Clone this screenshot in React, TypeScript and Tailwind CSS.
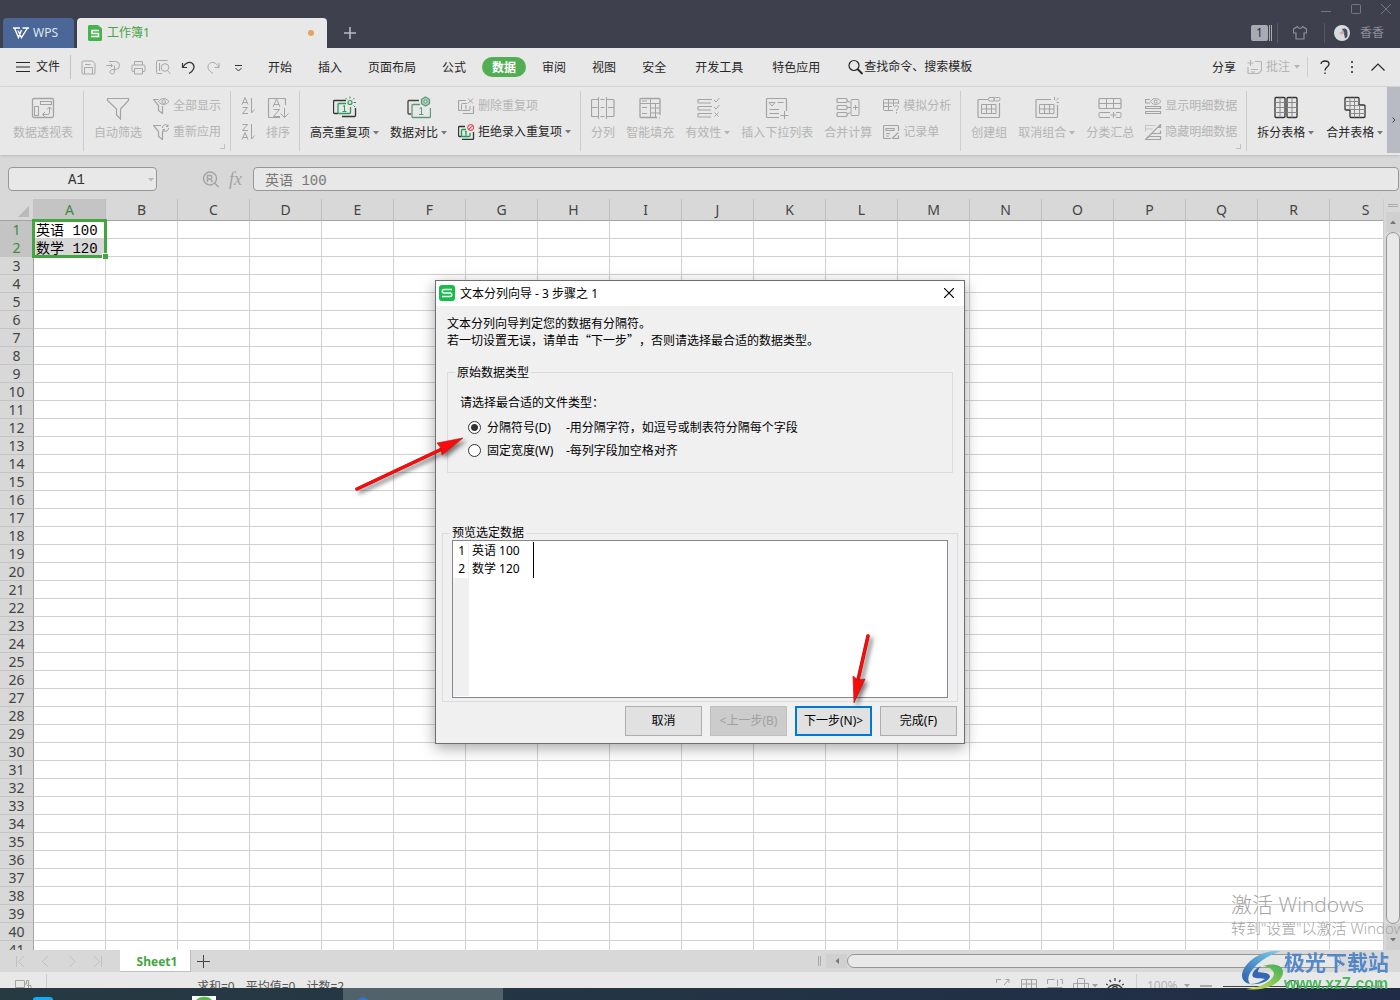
import type { ReactNode } from "react";
import { clsx } from "clsx";

const COLUMNS = "ABCDEFGHIJKLMNOPQRS".split("");
const ROWS = Array.from({ length: 41 }, (_, i) => i + 1);

const CELLS: Record<string, string> = {
    A1: "英语 100",
    A2: "数学 120",
};

/* ICONS */

interface IconProps {
    w?: number;
    h?: number;
    children: ReactNode;
    className?: string;
}

function Icon({ w = 24, h = 24, children, className }: IconProps) {
    return (
        <svg
            width={w}
            height={h}
            viewBox={`0 0 ${w} ${h}`}
            fill="none"
            stroke="currentColor"
            strokeWidth="1"
            aria-hidden="true"
            className={clsx("shrink-0", className)}
        >
            {children}
        </svg>
    );
}

function Caret({ className }: { className?: string }) {
    return (
        <Icon w={6} h={4} className={className}>
            <path d="M0 0h6L3 3.5z" fill="currentColor" stroke="none" />
        </Icon>
    );
}

const PivotIcon = () => (
    <Icon>
        <rect x="1.5" y="2.5" width="21" height="19" rx="1.5" strokeWidth="1.3" />
        <rect x="9.5" y="5.5" width="11" height="3" />
        <rect x="3.5" y="10.5" width="4" height="9" />
        <path d="M12 18.5h4.5a2 2 0 0 0 2-2V11M14 16l-2.5 2.5L14 21M16 13.5l2.5-2.5 2.5 2.5" />
    </Icon>
);

const FilterIcon = () => (
    <Icon>
        <path d="M1.5 2.5h21v2l-8 8.5v10l-4-4V13l-9-8.5z" strokeWidth="1.2" />
    </Icon>
);

const FilterEyeIcon = () => (
    <Icon w={17} h={16}>
        <path d="M5.5 1.5h-5l5 6v5l4 3V8" strokeWidth="1.2" />
        <path d="M5.5 3.5c3-4 7-4 10.5 0-3.5 4-7.5 4-10.5 0z" />
        <circle cx="10.7" cy="3.7" r="1.8" />
    </Icon>
);

const FilterRefreshIcon = () => (
    <Icon w={17} h={16}>
        <path d="M8 1.5H.5l5 6v5l4 3V8l1-1" strokeWidth="1.2" />
        <path d="M9.5 4a3 3 0 0 1 5-2.5M15 .5v2h-2M15.5 4a3 3 0 0 1-5 2.5M10 7.5v-2h2" />
    </Icon>
);

const SortAscIcon = () => (
    <Icon w={14} h={18}>
        <path d="M1 7.5 4 .5l3 7M2 5.5h4M1.5 10.5h5l-5 6H7M10.5 1v15M10.5 16l3-3.5" />
    </Icon>
);

const SortDescIcon = () => (
    <Icon w={14} h={18}>
        <path d="M1.5 1.5h5l-5 6H7M1 16.5l3-7 3 7M2 14.5h4M10.5 1v15M10.5 16l3-3.5" />
    </Icon>
);

const SortIcon = () => (
    <Icon>
        <path d="M19.500 9V3.500a1 1 0 0 0-1-1h-15a1 1 0 0 0-1 1v17a1 1 0 0 0 1 1H14" strokeWidth="1.2" />
        <path d="M7 11l3.5-8L14 11M8 8.500h5M7.500 13.500h6l-6 7H14M18.500 12v9.500M14.500 17.500l4 4 4-4" />
    </Icon>
);

const HighlightIcon = () => (
    <Icon>
        <path d="M13 4.5H1.5a1 1 0 0 0-1 1v11a1 1 0 0 0 1 1H5M9 20.5h12.5a1 1 0 0 0 1-1V12" stroke="#333" strokeWidth="1.3" />
        <g stroke="#2f9a5c">
            <path d="M13 7.5H6a1 1 0 0 0-1 1v8a1 1 0 0 0 1 1h10.5a1 1 0 0 0 1-1V11" strokeWidth="1.3" />
            <path d="M10 10.5l1.5-1V16M9.5 15.5h4" />
            <circle cx="17" cy="6.5" r="2" strokeWidth="1.2" />
            <path d="M17 .5v2M12.5 2 14 3.500M21.5 2 20 3.500M20.5 6.500H23M20.5 9.500 22 11" />
        </g>
    </Icon>
);

const CompareIcon = () => (
    <Icon>
        <path d="M12 4.5H2a1 1 0 0 0-1 1V17a1 1 0 0 0 1 1h2" stroke="#444" strokeWidth="1.3" />
        <g stroke="#5a9a76">
            <path d="M13 8.5H6a1 1 0 0 0-1 1v11a1 1 0 0 0 1 1h16.5a1 1 0 0 0 1-1V12" strokeWidth="1.3" />
            <path d="M12.5 12.5l2-1v7M12 18.5h4.5" />
            <path d="M18.5 1l4 2.3v4.4l-4 2.3-4-2.3V3.3z" fill="#a9cbb8" strokeWidth="1.2" />
            <circle cx="18.5" cy="5.5" r="1.5" fill="#e8e8e8" />
        </g>
    </Icon>
);

const DeleteDupIcon = () => (
    <Icon w={17} h={16}>
        <path d="M8 2.5H1.5a1 1 0 0 0-1 1v8a1 1 0 0 0 1 1h2M5 15.5h9.5a1 1 0 0 0 1-1V8" strokeWidth="1.2" />
        <path d="M9 5.5H4.5a1 1 0 0 0-1 1v5a1 1 0 0 0 1 1H11a1 1 0 0 0 1-1V8M7 8l1-.5v4M10 .5l5 5M15 .5l-5 5" />
    </Icon>
);

const RejectDupIcon = () => (
    <Icon w={17} h={16}>
        <path d="M7 2.5H1.5a1 1 0 0 0-1 1v8a1 1 0 0 0 1 1h2M4 15.5h10.5a1 1 0 0 0 1-1V8" stroke="#333" strokeWidth="1.3" />
        <path d="M8 5.5H4.5a1 1 0 0 0-1 1v5a1 1 0 0 0 1 1H11a1 1 0 0 0 1-1V9M7 8l1-.5v4" stroke="#1f9a52" strokeWidth="1.3" />
        <circle cx="12.7" cy="3.5" r="3" fill="#f3d2d2" stroke="#d0393f" />
        <path d="M10.5 5.5l4.5-4" stroke="#d0393f" />
    </Icon>
);

const SplitColsIcon = () => (
    <Icon>
        <path d="M7 3.5H1.5a1 1 0 0 0-1 1v15a1 1 0 0 0 1 1H7M16 3.5h6a1 1 0 0 1 1 1v15a1 1 0 0 1-1 1h-6" strokeWidth="1.2" />
        <path d="M7.5 1v22M15.5 1v22M.5 11.5h6M17 11.5h6M9.5 3.5h4M9.5 20.5h4M9.5 11.5h4" />
    </Icon>
);

const SmartFillIcon = () => (
    <Icon>
        <path d="M19 21.5H3a1 1 0 0 1-1-1v-17a1 1 0 0 1 1-1h18a1 1 0 0 1 1 1V19" strokeWidth="1.3" />
        <path d="M2 7.5h20M12.5 2.5v19M4 5h5M4 11.5h5M4 17.5h5M12.5 12H22M12.5 17H22M17.5 7.5v14M22 22h-1" />
    </Icon>
);

const ValidityIcon = () => (
    <Icon>
        <path d="M16 3.5H3a1 1 0 0 0-1 1V6a1 1 0 0 0 1 1h12M16 10.5H3a1 1 0 0 0-1 1V13a1 1 0 0 0 1 1h12M16 17.5H3a1 1 0 0 0-1 1V20a1 1 0 0 0 1 1h12" strokeWidth="1.2" />
        <path d="M18 4l2 2 3.5-4M18 11l2 2 3.5-4M18.5 16.5l4 4M22.5 16.5l-4 4" />
    </Icon>
);

const DropListIcon = () => (
    <Icon>
        <path d="M21.5 15V3.5a1 1 0 0 0-1-1h-18a1 1 0 0 0-1 1v17a1 1 0 0 0 1 1H14" strokeWidth="1.2" />
        <path d="M4 6.5h6L7 10zM12.5 6.5h6M4.5 13.5H14M4.5 17.5H14M19.5 15v8M15.5 19.5h8" />
    </Icon>
);

const ConsolidateIcon = () => (
    <Icon>
        <rect x="1" y="2.5" width="10" height="4" rx="1" strokeWidth="1.2" />
        <rect x="1" y="9.5" width="10" height="4" rx="1" strokeWidth="1.2" />
        <rect x="1" y="16.5" width="10" height="4" rx="1" strokeWidth="1.2" />
        <rect x="15" y="3.5" width="8" height="16" rx="1" />
        <path d="M11 4.5l3 2M11 11.5h4M11 18.5l3-2M17 11.5h5M19.5 9v5" />
    </Icon>
);

const WhatIfIcon = () => (
    <Icon w={17} h={16}>
        <path d="M10 12.5H1.5a1 1 0 0 1-1-1v-9a1 1 0 0 1 1-1h13a1 1 0 0 1 1 1V6M.5 5h15M.5 8.5H9M5.5 1.5v11M10.5 1.5V8" />
        <path d="M11.5 9.5c0-2.5 4-2.5 4 0 0 1.5-2 1.5-2 3.5M13.5 14v1.5" />
    </Icon>
);

const FormIcon = () => (
    <Icon w={17} h={16}>
        <path d="M8 14.5H1.5a1 1 0 0 1-1-1v-11a1 1 0 0 1 1-1h13a1 1 0 0 1 1 1V7M3 4.5h8v2H3zM3 9.5h4M3 12h3M9 14.5l6.5-6M10 14.5h5.5v-3" strokeWidth="1.2" />
    </Icon>
);

const GridGlyph = ({ d }: { d: string }) => (
    <Icon>
        <path d={d} strokeWidth="1.2" />
        <path d="M4.5 8.5H19v9H4.5zM4.5 13H19M9.5 8.5v9M14.5 8.5v9" />
    </Icon>
);

const GroupIcon = () => (
    <div className="relative text-[#a3a3a3]">
        <GridGlyph d="M11 3.5H2a1 1 0 0 0-1 1v16a1 1 0 0 0 1 1h19.5a1 1 0 0 0 1-1V7" />
        <Icon w={13} h={5} className="absolute top-px right-0">
            <rect x=".5" y=".5" width="6" height="3.5" rx="1.5" />
            <rect x="6" y=".5" width="6" height="3.5" rx="1.5" />
        </Icon>
    </div>
);

const UngroupIcon = () => (
    <div className="relative text-[#a3a3a3]">
        <GridGlyph d="M16 3.5H2a1 1 0 0 0-1 1v16a1 1 0 0 0 1 1h19.5a1 1 0 0 0 1-1V9" />
        <Icon w={6} h={6} className="absolute top-px right-0">
            <path d="M1.5 0v3M5.5 1 3 3.5M3.5 5.5H6" />
        </Icon>
    </div>
);

const SubtotalIcon = () => (
    <Icon>
        <rect x="1" y="2.5" width="22" height="10" rx="1" strokeWidth="1.2" />
        <path d="M1 7.5h22M8.5 2.5v10M15.5 2.5v10M12 21.5H2a1 1 0 0 1-1-1v-3a1 1 0 0 1 1-1h10M18 16.5h4a1 1 0 0 1 1 1v3a1 1 0 0 1-1 1h-4M12.5 19h6M15.5 16v6" />
    </Icon>
);

const ShowDetailIcon = () => (
    <Icon w={17} h={16}>
        <path d="M5 1.5H.5V5H5M.5 8.5h15v2H.5zM.5 13.5h15v2H.5z" strokeWidth="1.2" />
        <path d="M5.500 3.500c3-4 7-4 10.500 0-3.500 4-7.500 4-10.500 0z" />
        <circle cx="10.7" cy="3.5" r="1.5" />
    </Icon>
);

const HideDetailIcon = () => (
    <Icon w={17} h={16}>
        <path d="M.5 8V1.5h10M.5 5h7" opacity=".5" />
        <path d="M.5 15.5l15-15v3H13M15.5 6.5v3H7M4 12.5h11.5v3H.5z" strokeWidth="1.2" />
    </Icon>
);

const SplitTableIcon = () => (
    <Icon>
        <rect x="1" y="1.5" width="10" height="20" rx="1" strokeWidth="1.3" />
        <rect x="13" y="1.5" width="10" height="20" rx="1" strokeWidth="1.3" />
        <path d="M1 6.5h10M1 11.5h10M1 16.5h10M6 1.5v20M13 6.5h10M13 11.5h10M13 16.5h10M18 1.5v20" stroke="#888" />
    </Icon>
);

const MergeTableIcon = () => (
    <Icon>
        <path d="M2 2.5a1 1 0 0 1 1-1h12a1 1 0 0 1 1 1V9h5a1 1 0 0 1 1 1v10.5a1 1 0 0 1-1 1H8a1 1 0 0 1-1-1V14H3a1 1 0 0 1-1-1z" strokeWidth="1.3" />
        <path d="M2 5.5h14M2 9.5h14M7 13.5h15M7 17.5h15M7 1.5V14M11.5 1.5v20M16.5 9v12.5" stroke="#888" />
    </Icon>
);

/* TITLE BAR */

function TitleBar() {
    return (
        <header className="flex h-12 shrink-0 justify-between bg-[#3e414d]">
            <div className="flex items-end">
                <button type="button" className="ml-[3px] flex h-[30px] w-[71px] items-center gap-1 rounded-t bg-[#4a6797] pl-[10px] text-xs text-[#dfe5ee]">
                    <Icon w={16} h={12} className="text-white">
                        <path d="M0 1h7M9.5 1H16M1.5 1l4 9.5 3-7.5M5 3.5l3.5 7 6-9.5" strokeWidth="1.4" />
                    </Icon>
                    WPS
                </button>
                <div className="ml-[3px] flex h-[30px] w-[250px] items-center rounded-t bg-[#e8e8e8] pl-[11px] text-xs text-[#43a53f]">
                    <Icon w={14} h={16} className="mr-[5px]">
                        <path d="M1.5 0H10l4 3.5v11a1.5 1.5 0 0 1-1.5 1.5h-11A1.5 1.5 0 0 1 0 14.5v-13A1.5 1.5 0 0 1 1.5 0z" fill="#45b449" stroke="none" />
                        <path d="M11 5.5H4v3h6.5v3H3" stroke="#fff" strokeWidth="1.5" />
                    </Icon>
                    工作簿1
                    <span className="mr-[13px] ml-auto size-[6px] rounded-full bg-[#e8a25c]" />
                </div>
                <button type="button" aria-label="新建" className="flex h-[30px] w-[46px] items-center justify-center text-[#b9bbc2]">
                    <Icon w={12} h={12}>
                        <path d="M6 0v12M0 6h12" strokeWidth="1.6" />
                    </Icon>
                </button>
            </div>
            <div className="flex flex-col items-end">
                <div className="flex h-[18px] items-center gap-5 pr-[9px] text-[#747782]">
                    <Icon w={10} h={10}>
                        <path d="M0 7.5h10" />
                    </Icon>
                    <Icon w={10} h={10}>
                        <rect x=".5" y=".5" width="9" height="9" rx="1" />
                    </Icon>
                    <Icon w={10} h={10}>
                        <path d="M0 0l10 10M10 0 0 10" />
                    </Icon>
                </div>
                <div className="flex h-[30px] items-center pr-4 text-xs text-[#8d8f99]">
                    <span className="flex h-4 w-[17px] items-center justify-center rounded-xs bg-[#a9abb3] text-[#2b2e38]">1</span>
                    <span className="ml-px h-4 w-[3px] border-x border-[#a9abb3]" />
                    <span className="ml-[5px] h-5 w-px bg-[#555863]" />
                    <Icon w={14} h={14} className="ml-[15px]">
                        <path d="M4.5.5C5 3 9 3 9.5.5l4 2.500v4H11v6H3V7H.5V3z" strokeWidth="1.2" />
                    </Icon>
                    <span className="ml-[17px] h-5 w-px bg-[#555863]" />
                    <Icon w={16} h={16} className="ml-[9px]">
                        <circle cx="8" cy="8" r="8" fill="#d5dde0" stroke="none" />
                        <path d="M8 4c3-1.5 5.5 0 5.5 3.5 0 3 .5 4-2 6-1.5-1-.5-3-1.5-4.5z" fill="#4d4c58" stroke="none" />
                        <path d="M5 8.5 9 5l1.5 3L8 9.5z" fill="#d3aaa6" stroke="none" />
                    </Icon>
                    <span className="ml-[10px]">香香</span>
                </div>
            </div>
        </header>
    );
}

/* MENU */

const TABS = ["开始", "插入", "页面布局", "公式", "数据", "审阅", "视图", "安全"];

function QuickButton({ label, dark, children }: { label: string; dark?: boolean; children: ReactNode }) {
    return (
        <button type="button" aria-label={label} className={clsx("flex h-6 w-[25px] items-center justify-center", dark ? "text-[#333]" : "text-[#a8a8a8]")}>
            <Icon w={15} h={15}>{children}</Icon>
        </button>
    );
}

function MenuBar() {
    return (
        <nav className="flex h-[39px] shrink-0 items-center border-b border-[#d6d6d6] bg-[#e8e8e8] text-xs leading-[22px] text-[#262626]">
            <button type="button" className="ml-4 flex h-[22px] items-center gap-[6px]">
                <Icon w={14} h={10}>
                    <path d="M0 .5h14M0 5h14M0 9.5h14" />
                </Icon>
                文件
            </button>
            <span className="ml-[10px] h-6 w-px bg-[#c2c2c2]" />
            <div className="ml-[5px] flex">
                <QuickButton label="保存">
                    <path d="M1 2a1 1 0 0 1 1-1h9.5L14 3.5V13a1 1 0 0 1-1 1H2a1 1 0 0 1-1-1zM3.5 14V7.5h8V14M4 4.5h5.5" />
                </QuickButton>
                <QuickButton label="输出为PDF">
                    <path d="M3 1.5h6.5a4 4 0 0 1 0 8H7c-2 0-3 1-3 2.500 0 2.500 4.500 2.500 4.500 0V5.500M.5 5.500h6M4.500 3.500l2 2-2 2" />
                </QuickButton>
                <QuickButton label="打印">
                    <path d="M3.5 5V1.5h8V5M3.5 11.5H2a1 1 0 0 1-1-1V6a1 1 0 0 1 1-1h11a1 1 0 0 1 1 1v4.5a1 1 0 0 1-1 1h-1.5M3.5 8.5h8V14h-8z" />
                </QuickButton>
                <QuickButton label="打印预览">
                    <path d="M6 13.5H1.5a1 1 0 0 1-1-1v-11a1 1 0 0 1 1-1h10M3.5 3v8M11.5 10.5l3 3.5" />
                    <circle cx="9" cy="7.5" r="3.8" />
                </QuickButton>
                <QuickButton label="撤销" dark>
                    <path d="M1.5 3v4.5H6M1.5 7.5C5 2 9 1.5 11.5 3.5c3 3 1.5 7-3.5 10" strokeWidth="1.2" />
                </QuickButton>
                <QuickButton label="恢复">
                    <path d="M13 3v4.5H8.5M13 7.5C10 2 6 1.5 3.5 3.5c-3 3-1.5 7 3.5 10" />
                </QuickButton>
                <QuickButton label="自定义快速访问" dark>
                    <path d="M4 5.5h7M4.5 8l3 3 3-3" />
                </QuickButton>
            </div>
            <div className="ml-1 flex items-center">
                {TABS.map(tab => (
                    <button
                        key={tab}
                        type="button"
                        className={clsx(
                            "h-5 whitespace-nowrap",
                            tab === "数据" ? "mx-[3px] rounded-full bg-[#52ad53] px-[10px] font-bold text-white" : "px-[13px]"
                        )}
                    >
                        {tab}
                    </button>
                ))}
                <button type="button" className="ml-4 h-5 whitespace-nowrap">开发工具</button>
                <button type="button" className="ml-[29px] h-5 whitespace-nowrap">特色应用</button>
            </div>
            <button type="button" className="ml-7 flex h-[22px] items-center whitespace-nowrap">
                <Icon w={16} h={16}>
                    <circle cx="6" cy="6.5" r="5" strokeWidth="1.2" />
                    <path d="M9.5 10l5 5" strokeWidth="1.8" />
                </Icon>
                查找命令、搜索模板
            </button>
            <div className="ml-auto flex items-center whitespace-nowrap">
                <button type="button" className="h-5">分享</button>
                <button type="button" className="ml-[11px] flex h-[22px] items-center gap-1 text-[#b4b4b4]">
                    <Icon w={15} h={15}>
                        <path d="M3.5 0v6M.5 3h6M8 1.5h5.5a1 1 0 0 1 1 1v8l-3 3H2a1 1 0 0 1-1-1V7M4 9.5h7M4 12h4" strokeWidth="1.2" />
                    </Icon>
                    批注
                    <Caret />
                </button>
                <span className="ml-[7px] h-5 w-px bg-[#cfcfcf]" />
                <button type="button" aria-label="帮助" className="ml-3">
                    <Icon w={10} h={15}>
                        <path d="M1 4c0-4 8-4 8 0 0 3-4 3-4 6.5M5 12.5V14" strokeWidth="1.3" />
                    </Icon>
                </button>
                <button type="button" aria-label="更多" className="ml-5">
                    <Icon w={4} h={14}>
                        <path d="M1 1h2v2H1zM1 6h2v2H1zM1 11h2v2H1z" fill="#555" stroke="none" />
                    </Icon>
                </button>
                <button type="button" aria-label="折叠功能区" className="mr-[15px] ml-[17px]">
                    <Icon w={14} h={8}>
                        <path d="M.5 7.5 7 1l6.5 6.5" strokeWidth="1.2" />
                    </Icon>
                </button>
            </div>
        </nav>
    );
}

/* RIBBON */

interface ToolProps {
    label: string;
    icon: ReactNode;
    enabled?: boolean;
    menu?: boolean;
}

function BigTool({ label, icon, enabled, menu }: ToolProps) {
    return (
        <button type="button" className={clsx("flex flex-col items-center gap-[3px]", enabled ? "text-[#333]" : "text-[#a3a3a3]")}>
            {icon}
            <span className={clsx("flex items-center gap-[3px] leading-5 whitespace-nowrap", enabled ? "text-[#262626]" : "text-[#b4b4b4]")}>
                {label}
                {menu && <Caret className={enabled ? "text-[#777]" : "text-[#b4b4b4]"} />}
            </span>
        </button>
    );
}

function SmallTool({ label, icon, enabled, menu }: ToolProps) {
    return (
        <button type="button" className={clsx("flex h-[26px] items-center gap-[3px] whitespace-nowrap", enabled ? "text-[#262626]" : "text-[#a3a3a3]")}>
            {icon}
            <span className={enabled ? "" : "text-[#b4b4b4]"}>{label}</span>
            {menu && <Caret className="text-[#777]" />}
        </button>
    );
}

function ToolGroup({ children, corner, first }: { children: ReactNode; corner?: boolean; first?: boolean }) {
    return (
        <div className={clsx("relative my-1 flex shrink-0 items-center gap-[11px] border-r border-[#cdcdcd] pb-1", first ? "pr-[10px] pl-[13px]" : "pr-[9px] pl-[10px]")}>
            {children}
            {corner && <span className="absolute right-[5px] bottom-[2px] size-[5px] border-r border-b border-[#c0c0c0]" />}
        </div>
    );
}

function Ribbon() {
    return (
        <div className="relative z-10 flex h-[68px] shrink-0 overflow-hidden bg-[#e8e8e8] text-xs shadow-sm">
            <ToolGroup first>
                <BigTool label="数据透视表" icon={<PivotIcon />} />
            </ToolGroup>
            <ToolGroup corner>
                <BigTool label="自动筛选" icon={<FilterIcon />} />
                <div>
                    <SmallTool label="全部显示" icon={<FilterEyeIcon />} />
                    <SmallTool label="重新应用" icon={<FilterRefreshIcon />} />
                </div>
            </ToolGroup>
            <ToolGroup>
                <div className="flex flex-col gap-2 text-[#a3a3a3]">
                    <button type="button" aria-label="升序"><SortAscIcon /></button>
                    <button type="button" aria-label="降序"><SortDescIcon /></button>
                </div>
                <BigTool label="排序" icon={<SortIcon />} />
            </ToolGroup>
            <ToolGroup>
                <BigTool label="高亮重复项" icon={<HighlightIcon />} enabled menu />
                <BigTool label="数据对比" icon={<CompareIcon />} enabled menu />
                <div>
                    <SmallTool label="删除重复项" icon={<DeleteDupIcon />} />
                    <SmallTool label="拒绝录入重复项" icon={<RejectDupIcon />} enabled menu />
                </div>
            </ToolGroup>
            <ToolGroup>
                <BigTool label="分列" icon={<SplitColsIcon />} />
                <BigTool label="智能填充" icon={<SmartFillIcon />} />
                <BigTool label="有效性" icon={<ValidityIcon />} menu />
                <BigTool label="插入下拉列表" icon={<DropListIcon />} />
                <BigTool label="合并计算" icon={<ConsolidateIcon />} />
                <div>
                    <SmallTool label="模拟分析" icon={<WhatIfIcon />} />
                    <SmallTool label="记录单" icon={<FormIcon />} />
                </div>
            </ToolGroup>
            <ToolGroup corner>
                <BigTool label="创建组" icon={<GroupIcon />} />
                <BigTool label="取消组合" icon={<UngroupIcon />} menu />
                <BigTool label="分类汇总" icon={<SubtotalIcon />} />
                <div>
                    <SmallTool label="显示明细数据" icon={<ShowDetailIcon />} />
                    <SmallTool label="隐藏明细数据" icon={<HideDetailIcon />} />
                </div>
            </ToolGroup>
            <div className="flex shrink-0 items-center gap-3 pb-1 pl-[10px]">
                <BigTool label="拆分表格" icon={<SplitTableIcon />} enabled menu />
                <BigTool label="合并表格" icon={<MergeTableIcon />} enabled menu />
            </div>
            <button type="button" aria-label="向右滚动" className="mb-[2px] ml-auto flex w-[13px] items-center justify-center bg-[#b8bac4] text-[#444]">
                <Icon w={4} h={6}>
                    <path d="M.5.5 3 3 .5 5.5" />
                </Icon>
            </button>
        </div>
    );
}

/* FORMULA BAR */

function FormulaBar() {
    return (
        <div className="flex h-11 shrink-0 items-center bg-[#d8d8d8] pt-1 pl-2 font-['Liberation_Mono','Noto_Sans_CJK_SC',monospace] text-sm">
            <div className="relative">
                <input
                    aria-label="名称框"
                    defaultValue="A1"
                    className="h-6 w-[149px] rounded border border-[#979797] bg-[#e8e8e8] pt-[2px] pr-3 text-center text-[#333]"
                />
                <Caret className="absolute top-[11px] right-[3px] text-[#b9b9b9]" />
            </div>
            <div className="ml-[45px] flex items-center gap-[9px] text-[#a3a3a3]">
                <Icon w={18} h={17}>
                    <circle cx="8" cy="7.5" r="6.5" strokeWidth="1.4" />
                    <path d="M5.5 11V4.5h3a1.8 1.8 0 0 1 0 3.500h-3M8.500 8l2 3M12.500 12l4 4" strokeWidth="1.4" />
                </Icon>
                <span className="w-[18px] font-['Liberation_Serif','Noto_Serif',serif] text-lg leading-5 italic">fx</span>
            </div>
            <input
                aria-label="编辑栏"
                defaultValue="英语 100"
                className="mr-px ml-[6px] h-6 min-w-0 flex-1 rounded border border-[#979797] bg-[#e8e8e8] pl-[11px] text-[#777]"
            />
        </div>
    );
}

/* SHEET */

function Sheet() {
    return (
        <main className="flex min-h-0 flex-1 bg-[#d8d8d8]">
            <div className="min-w-0 flex-1 overflow-hidden bg-white">
                <table className="w-px table-fixed border-separate border-spacing-0 text-sm">
                    <colgroup>
                        <col className="w-[34px]" />
                        {COLUMNS.map(c => (
                            <col key={c} className="w-[72px]" />
                        ))}
                    </colgroup>
                    <thead className="font-['Noto_Sans','Noto_Sans_CJK_SC',sans-serif] leading-[21px]">
                        <tr className="h-[22px]">
                            <th className="border-r border-b border-r-[#c0c0c0] border-b-[#a3a3a3] bg-[#d8d8d8] p-0">
                                <span className="mt-1 ml-[18px] block size-[11px] bg-[#b9b9b9] [clip-path:polygon(100%_0,100%_100%,0_100%)]" />
                            </th>
                            {COLUMNS.map(c => (
                                <th
                                    key={c}
                                    scope="col"
                                    className={clsx(
                                        "border-r border-b border-r-[#bebebe] border-b-[#a3a3a3] p-0 font-normal",
                                        c === "A" ? "bg-[#c4c4c4] text-[#3c8c3c]" : "bg-[#d8d8d8] text-[#444]"
                                    )}
                                >
                                    {c}
                                </th>
                            ))}
                        </tr>
                    </thead>
                    <tbody>
                        {ROWS.map(r => (
                            <tr key={r} className="h-[18px]">
                                <th
                                    scope="row"
                                    className={clsx(
                                        "border-r border-b border-r-[#a3a3a3] border-b-[#c4c4c4] p-0 font-['Noto_Sans','Noto_Sans_CJK_SC',sans-serif] leading-[17px] font-normal",
                                        r <= 2 ? "bg-[#c4c4c4] text-[#3c8c3c]" : "bg-[#d8d8d8] text-[#444]"
                                    )}
                                >
                                    {r}
                                </th>
                                {COLUMNS.map(c => (
                                    <td
                                        key={c}
                                        className={clsx(
                                            "relative border-r border-b border-[#d0d0d0] p-0 pt-1 pl-[2px] font-['Liberation_Mono','Noto_Sans_CJK_SC',monospace] leading-[13px] whitespace-nowrap text-black",
                                            c === "A" && r === 2 && "bg-[#d8d8d8]"
                                        )}
                                    >
                                        {CELLS[`${c}${r}`]}
                                        {c === "A" && r === 1 && (
                                            <span className="pointer-events-none absolute -top-[2px] -left-[2px] z-10 h-[39px] w-[75px] border-3 border-[#43a53f]">
                                                <span className="absolute -right-1 -bottom-1 size-[6px] border-t border-l border-white bg-[#43a53f]" />
                                            </span>
                                        )}
                                    </td>
                                ))}
                            </tr>
                        ))}
                    </tbody>
                </table>
            </div>
            {/* VERTICAL SCROLLBAR */}
            <div className="flex w-[17px] shrink-0 flex-col items-center border-l border-[#cdcdcd] pl-[2px] text-[#777]">
                <span className="mt-[5px] h-[3px] w-[10px] border-y border-[#a9a9a9]" />
                <div className="mt-[5px] flex h-5 w-full items-center justify-center bg-[#d0d0d0]">
                    <Caret className="rotate-180" />
                </div>
                <div className="w-full flex-1 rounded-full border border-[#979797] bg-[#e8e8e8]" />
                <div className="flex h-[26px] w-full items-center justify-center bg-[#d0d0d0] pt-[6px]">
                    <Caret />
                </div>
            </div>
        </main>
    );
}

function SheetTabs() {
    return (
        <div className="flex h-[22px] shrink-0 items-center bg-[#d8d8d8] text-xs">
            <div className="ml-[15px] flex gap-4 text-[#c0c0c0]">
                {["M1.5 0v11M9 0 3.5 5.5 9 11", "M7 0 1.5 5.5 7 11", "M2.5 0 8 5.5 2.5 11", "M8.5 0v11M1 0l5.5 5.5L1 11"].map(d => (
                    <Icon key={d} w={10} h={11}>
                        <path d={d} />
                    </Icon>
                ))}
            </div>
            <button type="button" className="ml-[17px] h-full w-[71px] border-r border-b border-[#c0c0c0] bg-white pt-[2px] pl-1 font-['Noto_Sans','Noto_Sans_CJK_SC',sans-serif] font-bold text-[#43a53f]">
                Sheet1
            </button>
            <button type="button" aria-label="新建工作表" className="ml-[6px] text-[#444]">
                <Icon w={13} h={13}>
                    <path d="M6.5 0v13M0 6.5h13" />
                </Icon>
            </button>
            <div className="ml-auto flex h-full w-[582px] items-center">
                <span className="h-[10px] w-[3px] border-x border-[#a9a9a9]" />
                <div className="ml-[5px] flex h-[14px] w-[21px] items-center justify-center bg-[#d0d0d0] text-[#777]">
                    <Caret className="rotate-90" />
                </div>
                <div className="h-[14px] flex-1 rounded-full border border-[#979797] bg-[#e8e8e8]" />
                <div className="mr-[29px] flex h-[14px] w-[30px] items-center justify-center text-[#777]">
                    <Caret className="-rotate-90" />
                </div>
            </div>
        </div>
    );
}

function StatusBar() {
    return (
        <footer className="h-4 shrink-0 overflow-hidden bg-[#e8e8e8] text-xs text-[#555]">
            <div className="flex h-7 items-center">
                <Icon w={17} h={14} className="ml-[15px] text-[#a3a3a3]">
                    <path d="M.5 1.5h9v7h-9zM9.5 5h2V1.5h2V9M12 6.5h4v3h-2V13M4 8.5V12" />
                </Icon>
                <span className="ml-[14px] h-6 w-px bg-[#cdcdcd]" />
                <div className="ml-[150px] flex gap-[11px] pt-[2px] whitespace-nowrap">
                    <span>求和=0</span>
                    <span>平均值=0</span>
                    <span>计数=2</span>
                </div>
                <div className="ml-auto flex items-center text-[#a3a3a3]">
                    <Icon w={16} h={16}>
                        <path d="M6 1.5H1.5V5M1.5 10v4.5H14V11M9 7l5-5.5M10.5 1.5H14V5" />
                    </Icon>
                    <Icon w={17} h={16} className="ml-[10px]">
                        <path d="M.5 1.5h15v13H.5zM.5 6h15M.5 10.5h15M5.5 1.5v13M10.5 1.5v13" />
                    </Icon>
                    <Icon w={17} h={16} className="ml-[9px]">
                        <path d="M.5 6V1.5h7M10.5 1.5V8M13 1.5h2.500V6M.5 9.500h15" />
                    </Icon>
                    <Icon w={17} h={16} className="ml-[9px]">
                        <path d="M4.5 15V1.5a1 1 0 0 1 1-1h5a1 1 0 0 1 1 1V15M.5 10.5v-5h15v5zM4.5 10.5h7" />
                    </Icon>
                    <Caret className="ml-[2px]" />
                    <Icon w={18} h={18} className="ml-[8px] text-[#444]">
                        <path d="M1 13c3-7 13-7 16 0M9 1v3M3.5 3 5 5M14.5 3 13 5M0 7l2 1M18 7l-2 1" strokeWidth="1.3" />
                        <circle cx="9" cy="12" r="2.5" strokeWidth="1.3" />
                    </Icon>
                    <span className="ml-3 h-6 w-px bg-[#cdcdcd]" />
                    <span className="ml-[10px] w-[34px] font-['Noto_Sans','Noto_Sans_CJK_SC',sans-serif] text-[#b4b4b4]">100%</span>
                    <Caret className="ml-[3px]" />
                    <span className="ml-[10px] h-[2px] w-3 bg-[#a9a9a9]" />
                    <input
                        type="range"
                        aria-label="显示比例"
                        defaultValue={47}
                        className="ml-[11px] h-px w-[147px] appearance-none bg-[#444] [&::-webkit-slider-thumb]:size-[12px] [&::-webkit-slider-thumb]:appearance-none [&::-webkit-slider-thumb]:rounded-full [&::-webkit-slider-thumb]:border [&::-webkit-slider-thumb]:border-[#444] [&::-webkit-slider-thumb]:bg-[#e8e8e8]"
                    />
                    <Icon w={11} h={11} className="mr-[16px] ml-[3px]">
                        <path d="M5.5 0v11M0 5.5h11" strokeWidth="1.5" />
                    </Icon>
                </div>
            </div>
        </footer>
    );
}

function Taskbar() {
    return (
        <div className="flex h-3 shrink-0 items-end bg-linear-to-r from-[#263a42] to-[#202c47]">
            <span className="ml-[33px] h-[3px] w-5 rounded-t-sm bg-[#14a8f5]" />
            <Icon w={24} h={4} className="ml-[139px]">
                <path d="M0 0h24v4H0z" fill="#fff" stroke="none" />
                <path d="M4 4c4-4.5 13-4.5 16 0z" fill="#57b946" stroke="none" />
            </Icon>
            <div className="ml-[127px] flex h-full w-40 items-end bg-[#52626b]">
                <Icon w={12} h={3} className="ml-[14px]">
                    <path d="M0 3 6 0l6 3z" fill="#2f74e0" stroke="none" />
                </Icon>
            </div>
        </div>
    );
}

/* TEXT TO COLUMNS DIALOG */

function TypeOption({ label, hint, checked }: { label: string; hint: string; checked?: boolean }) {
    return (
        <label className="flex h-[23px] items-center">
            <input
                type="radio"
                name="file-type"
                defaultChecked={checked}
                className="size-[13px] appearance-none rounded-full border border-[#333] bg-white checked:bg-[radial-gradient(circle,#333_3px,white_4px)]"
            />
            <span className="ml-[6px] w-[79px]">{label}</span>
            <span>{hint}</span>
        </label>
    );
}

function DialogButton({ children, primary, disabled }: { children: ReactNode; primary?: boolean; disabled?: boolean }) {
    return (
        <button
            type="button"
            disabled={disabled}
            className={clsx(
                "h-[30px] w-[77px] pb-px whitespace-nowrap",
                primary && "border-2 border-[#0078d7] bg-[#e1e1e1]",
                disabled && "border border-[#bfbfbf] bg-[#cccccc] text-[#a0a0a0]",
                !primary && !disabled && "border border-[#adadad] bg-[#e1e1e1]"
            )}
        >
            {children}
        </button>
    );
}

function WizardDialog() {
    return (
        <section
            role="dialog"
            aria-label="文本分列向导"
            className="absolute inset-x-0 top-[280px] z-20 mx-auto w-[530px] border border-[#6f6f6f] bg-[#f0f0f0] font-['Noto_Sans','Noto_Sans_CJK_SC',sans-serif] text-xs leading-[17px] text-black shadow-[0_4px_14px_rgba(0,0,0,0.35)]"
        >
            <div className="flex h-[25px] items-center bg-white pb-px pl-[3px]">
                <Icon w={16} h={16} className="mr-[5px]">
                    <rect width="16" height="16" rx="3" fill="#12bf4a" stroke="none" />
                    <path d="M13 4.5H5A1.5 1.5 0 0 0 5 8h6a1.7 1.7 0 0 1 0 3.5H3" stroke="#fff" strokeWidth="1.5" />
                </Icon>
                文本分列向导 - 3 步骤之 1
                <button type="button" aria-label="关闭" className="mr-[10px] ml-auto">
                    <Icon w={10} h={10}>
                        <path d="M0 0l10 10M10 0 0 10" strokeWidth="1.2" />
                    </Icon>
                </button>
            </div>
            <div lang="zh-CN" className="px-[11px] pt-2 font-['Noto_Sans_CJK_SC',sans-serif] [text-spacing-trim:space-all]">
                <p>文本分列向导判定您的数据有分隔符。</p>
                <p>若一切设置无误，请单击“下一步”，否则请选择最合适的数据类型。</p>
            </div>
            <fieldset className="mx-[11px] mt-[16px] h-[109px] border border-[#dcdcdc] px-3">
                <legend className="-ml-[5px] px-[2px]">原始数据类型</legend>
                <p className="mt-[13px] mb-[5px]">请选择最合适的文件类型：</p>
                <div className="pl-2">
                    <TypeOption label="分隔符号(D)" hint="-用分隔字符，如逗号或制表符分隔每个字段" checked />
                    <TypeOption label="固定宽度(W)" hint="-每列字段加空格对齐" />
                </div>
            </fieldset>
            <fieldset className="mx-[6px] mt-[52px] h-[177px] border border-[#dcdcdc] px-[9px]">
                <legend className="-ml-[2px] px-[2px] leading-4">预览选定数据</legend>
                <div className="-mt-px flex h-[158px] border border-[#828790] bg-white py-px">
                    <div className="flex w-4 flex-col border-r border-[#f0f0f0] text-right leading-[18px]">
                        <span className="pr-[3px]">1</span>
                        <span className="pr-[3px]">2</span>
                        <span className="flex-1 bg-[#f0f0f0]" />
                    </div>
                    <div className="h-9 border-r border-black pr-[13px] pl-[3px] leading-[18px]">
                        <p>英语 100</p>
                        <p>数学 120</p>
                    </div>
                </div>
            </fieldset>
            <div className="mt-1 mr-[7px] mb-[7px] flex justify-end gap-2">
                <DialogButton>取消</DialogButton>
                <DialogButton disabled>&lt;上一步(B)</DialogButton>
                <DialogButton primary>下一步(N)&gt;</DialogButton>
                <DialogButton>完成(F)</DialogButton>
            </div>
            {/* pointers to the selected option and the next button */}
            <Icon w={120} h={66} className="pointer-events-none absolute top-[152px] -left-[84px] drop-shadow-[3px_3px_2px_rgba(0,0,0,0.5)]">
                <path d="M5 56 90 16" stroke="#b01010" strokeWidth="3.5" strokeLinecap="round" />
                <path d="M5 56 90 16" stroke="#fb0c0c" strokeWidth="2.5" strokeLinecap="round" />
                <path d="M111 5 85 10l4 5 1 7z" fill="#fb0c0c" stroke="#b01010" strokeWidth=".6" />
            </Icon>
            <Icon w={34} h={82} className="pointer-events-none absolute top-[349px] left-[411px] drop-shadow-[3px_3px_2px_rgba(0,0,0,0.5)]">
                <path d="M21 6 11 50" stroke="#b01010" strokeWidth="3.5" strokeLinecap="round" />
                <path d="M21 6 11 50" stroke="#fb0c0c" strokeWidth="2.5" strokeLinecap="round" />
                <path d="M7 73 6 46l5 4 7-1z" fill="#fb0c0c" stroke="#b01010" strokeWidth=".6" />
            </Icon>
        </section>
    );
}

/* WATERMARKS */

function ActivateNotice() {
    return (
        <div className="pointer-events-none absolute right-0 bottom-[62px] z-10 w-[169px] overflow-hidden font-['Open_Sans','Noto_Sans_CJK_SC',sans-serif] font-light whitespace-nowrap text-[#a3a3a3]">
            <p className="text-[21px] leading-7">激活 Windows</p>
            <p className="text-[15px] leading-5">转到"设置"以激活 Windows。</p>
        </div>
    );
}

function SiteBadge() {
    return (
        <div className="pointer-events-none absolute right-[11px] bottom-[5px] z-10 flex font-bold whitespace-nowrap">
            <svg width="43" height="42" viewBox="0 0 43 42" className="mt-[2px]" aria-hidden="true">
                <defs>
                    <linearGradient id="swoosh-blue" x1="0" y1="1" x2="1" y2="0">
                        <stop offset="0" stopColor="#2a5fa8" />
                        <stop offset="1" stopColor="#7fd0f0" />
                    </linearGradient>
                    <linearGradient id="swoosh-green" x1="0" y1="1" x2="1" y2="0">
                        <stop offset="0" stopColor="#d3e04e" />
                        <stop offset="1" stopColor="#3fae5a" />
                    </linearGradient>
                </defs>
                <path d="M40 0C20-2 2 12 1 24c0 5 3 8 8 9-3-4-2-9 3-15C19 9 29 4 40 0z" fill="url(#swoosh-blue)" />
                <path d="M20 15c-7 3-10 8-8 11 3 2 9 1 12 2-4 3-10 5-15 5 8 1 18-2 20-7 0-5-7-4-12-5 0-2 1-4 3-6z" fill="#3568b4" />
                <path d="M22 15c8-3 20-2 20 6C42 32 24 41 5 38c14-1 27-8 28-15 0-4-5-7-11-8z" fill="url(#swoosh-green)" />
            </svg>
            <div className="opacity-90">
                <p className="font-['Noto_Sans_CJK_SC',sans-serif] text-[21px] leading-6 text-[#4580c8]">极光下载站</p>
                <p className="font-['Liberation_Sans',sans-serif] text-base leading-[22px] text-[#3bb653]">www.xz7.com</p>
            </div>
        </div>
    );
}

export default function App() {
    return (
        <div className="relative flex h-screen flex-col overflow-hidden bg-[#d8d8d8] font-['Noto_Sans','Noto_Sans_CJK_SC',sans-serif]">
            <TitleBar />
            <MenuBar />
            <Ribbon />
            <FormulaBar />
            <Sheet />
            <SheetTabs />
            <StatusBar />
            <Taskbar />
            <WizardDialog />
            <ActivateNotice />
            <SiteBadge />
        </div>
    );
}
